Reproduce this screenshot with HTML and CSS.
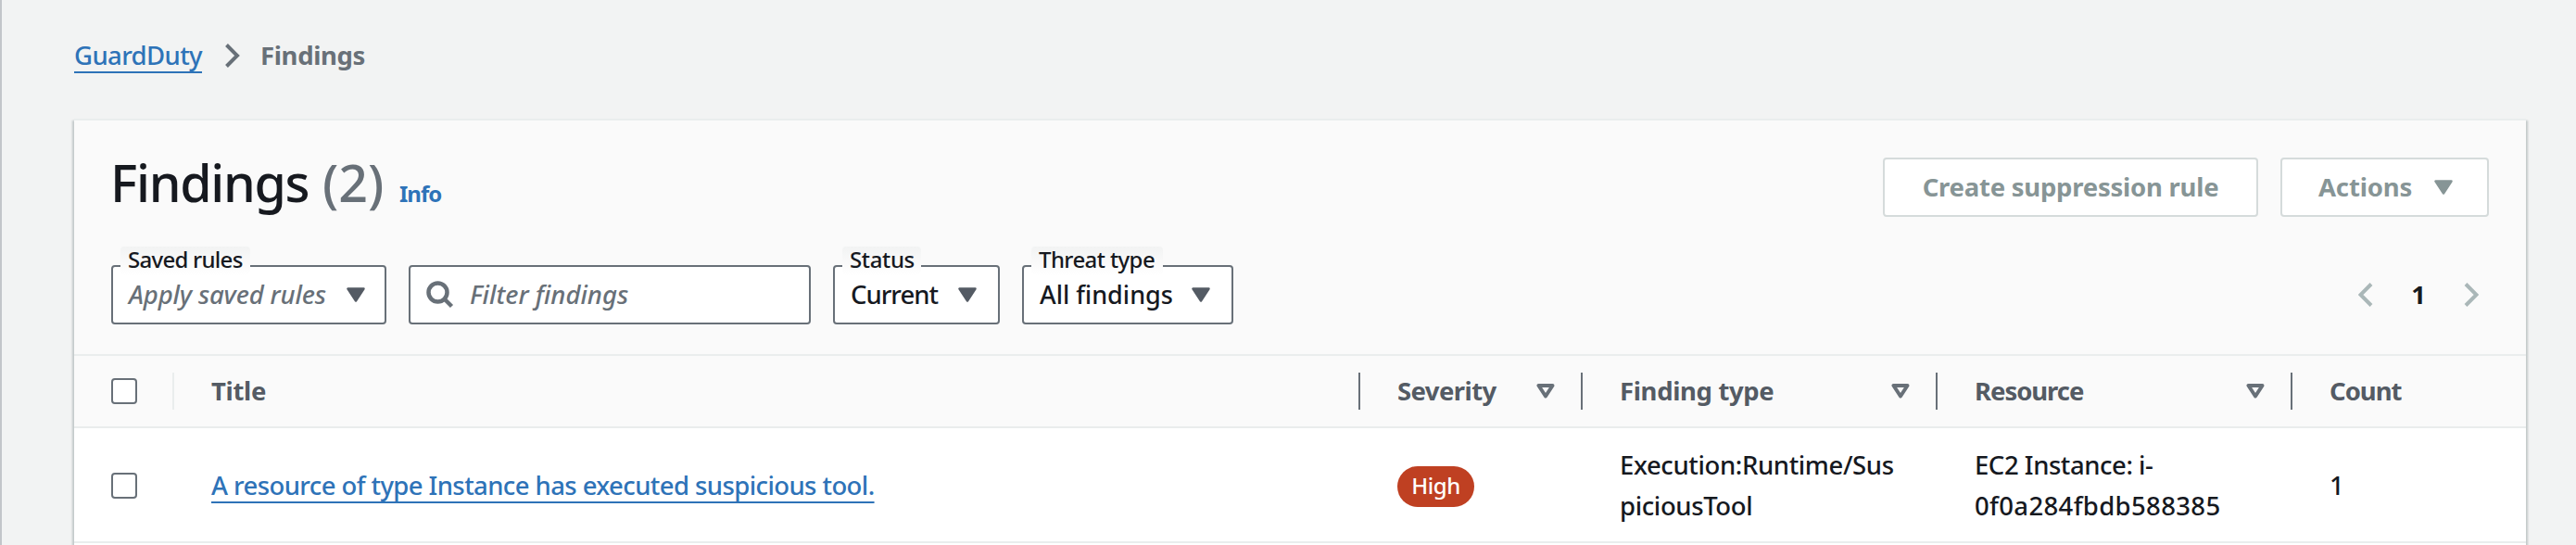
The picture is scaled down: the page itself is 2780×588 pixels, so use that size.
FILE: index.html
```
<!DOCTYPE html>
<html lang="en">
<head>
<meta charset="utf-8">
<title>Findings</title>
<link rel="stylesheet" href="styles.css">
</head>
<body>
<main class="page">
  <nav class="breadcrumb">
    <a class="link link-root" href="#">GuardDuty</a>
    <svg class="crumb-arrow" width="18" height="28" viewBox="0 0 18 28"><path d="M2.5 2.5 14 14 2.5 25.5"/></svg>
    <span class="crumb-current">Findings</span>
  </nav>

  <section class="card">
    <header class="card-header">
      <div class="title-row">
        <h1 class="title"><span class="title-text">Findings</span><span class="counter">(2)</span><a class="info" href="#">Info</a></h1>
        <div class="actions">
          <button class="button suppress" disabled>Create suppression rule</button>
          <button class="button menu" disabled><span class="menu-text">Actions</span><svg class="caret" width="20" height="16" viewBox="0 0 20 16"><path d="M1.5 1.5h17L10 14.5z"/></svg></button>
        </div>
      </div>

      <div class="filter-row">
        <div class="select select-rules">
          <span class="select-label label-rules">Saved rules</span>
          <span class="placeholder">Apply saved rules</span>
          <svg class="caret" width="20" height="16" viewBox="0 0 20 16"><path d="M1.5 1.5h17L10 14.5z"/></svg>
        </div>
        <div class="search">
          <svg class="search-icon" width="30" height="30" viewBox="0 0 30 30"><circle cx="12.5" cy="12.5" r="10"/><path d="m19.5 19.5 8 8"/></svg>
          <span class="search-text">Filter findings</span>
        </div>
        <div class="select select-status">
          <span class="select-label label-status">Status</span>
          <span class="value-status">Current</span>
          <svg class="caret" width="20" height="16" viewBox="0 0 20 16"><path d="M1.5 1.5h17L10 14.5z"/></svg>
        </div>
        <div class="select select-threat">
          <span class="select-label label-threat">Threat type</span>
          <span class="value-threat">All findings</span>
          <svg class="caret" width="20" height="16" viewBox="0 0 20 16"><path d="M1.5 1.5h17L10 14.5z"/></svg>
        </div>
        <div class="pagination">
          <svg class="page-arrow" width="16" height="28" viewBox="0 0 16 28"><path d="M14 2.5 2.5 14 14 25.5"/></svg>
          <span class="page-number">1</span>
          <svg class="page-arrow" width="16" height="28" viewBox="0 0 16 28"><path d="M2 2.5 13.5 14 2 25.5"/></svg>
        </div>
      </div>
    </header>

    <div class="row head">
      <div class="cell check-cell divided light"><span class="checkbox"></span></div>
      <div class="cell divided"><span class="th-title">Title</span></div>
      <div class="cell divided sortable"><span class="th-severity">Severity</span><svg class="sort" width="20" height="16" viewBox="0 0 20 16"><path d="M2.5 2h15L10 13.5z"/></svg></div>
      <div class="cell divided sortable"><span class="th-type">Finding type</span><svg class="sort" width="20" height="16" viewBox="0 0 20 16"><path d="M2.5 2h15L10 13.5z"/></svg></div>
      <div class="cell divided sortable"><span class="th-resource">Resource</span><svg class="sort" width="20" height="16" viewBox="0 0 20 16"><path d="M2.5 2h15L10 13.5z"/></svg></div>
      <div class="cell"><span class="th-count">Count</span></div>
    </div>

    <div class="row item">
      <div class="cell check-cell"><span class="checkbox"></span></div>
      <div class="cell"><a class="link link-finding" href="#">A resource of type Instance has executed suspicious tool.</a></div>
      <div class="cell"><span class="badge">High</span></div>
      <div class="cell"><span class="finding-type">Execution:Runtime/Sus<br>piciousTool</span></div>
      <div class="cell"><span class="instance">EC2 Instance: i-<br><span class="instance-id">0f0a284fbdb588385</span></span></div>
      <div class="cell"><span>1</span></div>
    </div>
    <div class="row next"></div>
  </section>
</main>
</body>
</html>
```
FILE: styles.css
```
* { box-sizing: border-box; }

body {
  margin: 0;
  background: #f2f3f3;
  color: #16191f;
  font-family: "Noto Sans", sans-serif;
  font-size: 27.5px;
  font-weight: 500;
  line-height: 44px;
}

.page {
  height: 588px;
  overflow: hidden;
  padding: 38px 54px 0 78px;
  border-left: 2px solid #c3c6ca;
}

/* Breadcrumb */
.breadcrumb { display: flex; align-items: center; height: 44px; }
.link {
  color: #2e73b8;
  text-decoration: underline 2px;
  text-underline-offset: 7px;
  text-decoration-skip-ink: none;
}
.link-root { width: 138px; letter-spacing: -0.61px; white-space: nowrap; }
.link-finding { letter-spacing: -0.59px; }
.crumb-arrow { margin: 0 22px 0 24px; fill: none; stroke: #687078; stroke-width: 4; }
.crumb-current { color: #687078; font-weight: 700; letter-spacing: -0.35px; margin-left: -1px; }

/* Card */
.card {
  margin-top: 46px;
  height: 480px;
  background: #fff;
  border-top: 2px solid #eaeded;
  box-shadow: 2px 2px 2px rgba(0, 28, 36, .2), -2px 2px 2px rgba(0, 28, 36, .2);
}
.card-header { height: 252px; padding: 35px 40px 0; background: #fafafa; }
.title-row { display: flex; justify-content: space-between; align-items: flex-start; height: 121px; }
.title { display: flex; align-items: baseline; margin: 0; font-size: 55.5px; font-weight: 500; line-height: 64px; white-space: nowrap; }
.title-text { width: 229px; margin-left: -1px; letter-spacing: -1.3px; }
.counter { width: 83px; color: #687078; }
.info { color: #2e73b8; font-size: 24px; font-weight: 700; letter-spacing: -1px; text-decoration: none; }

.actions { display: flex; gap: 24px; padding-top: 5px; }
.button {
  display: flex;
  align-items: center;
  height: 64px;
  padding: 0;
  color: #879596;
  background: #fff;
  border: 2px solid #d5dbdb;
  border-radius: 4px;
  font: 700 27.5px/44px "Noto Sans", sans-serif;
  white-space: nowrap;
}
.suppress { justify-content: center; width: 405px; letter-spacing: -0.24px; }
.menu { justify-content: space-between; width: 225px; padding: 0 37px 0 39px; letter-spacing: -0.16px; }
.caret { flex: none; fill: #545b64; stroke: #545b64; stroke-width: 2.5; stroke-linejoin: round; }
.menu .caret { fill: #879596; stroke: #879596; }

/* Filters */
.filter-row { display: flex; gap: 24px; height: 64px; white-space: nowrap; }
.select, .search {
  position: relative;
  display: flex;
  align-items: center;
  height: 64px;
  background: #fff;
  border: 2px solid #687078;
  border-radius: 4px;
}
.select { justify-content: space-between; padding: 0 21px 0 17px; }
.select-rules { width: 297px; }
.select-status { width: 180px; padding-right: 23px; }
.select-threat { width: 228px; padding-right: 23px; }
.select-label {
  position: absolute;
  left: 8px;
  top: -22px;
  height: 31px;
  padding-left: 8px;
  font-size: 24px;
  line-height: 27px;
  border-radius: 4px;
  background: linear-gradient(#f2f3f3, #fafafa 60%, #fff);
}
.label-rules { width: 140px; letter-spacing: -0.73px; }
.label-status { width: 85px; letter-spacing: -0.35px; }
.label-threat { width: 142px; letter-spacing: -0.6px; }
.placeholder { color: #687078; font-style: italic; letter-spacing: -0.17px; }
.value-status { letter-spacing: -1px; }
.value-threat { font-size: 27px; }
.search { width: 434px; padding-left: 17px; }
.search-icon { fill: none; stroke: #687078; stroke-width: 4.5; }
.search-text { margin-left: 17px; color: #687078; font-style: italic; }

.pagination { display: flex; align-items: center; margin-left: auto; padding-right: 11px; }
.page-arrow { fill: none; stroke: #aab7b8; stroke-width: 4; }
.page-number { width: 98px; text-align: center; font-weight: 700; }

/* Table */
.row { display: grid; grid-template-columns: 108px 1280px 240px 383px 383px 252px; }
.head { height: 78px; border-top: 2px solid #eaeded; background: #fafafa; color: #545b64; font-weight: 700; }
.item { height: 124px; padding-top: 2px; border-top: 2px solid #eaeded; }
.next { height: 4px; border-top: 2px solid #eaeded; }
.cell { display: flex; align-items: center; padding-left: 40px; white-space: nowrap; }
.divided::after { content: ""; width: 2px; height: 40px; margin-left: auto; background: #687078; }
.sortable::after { margin-left: 0; }
.light::after { background: #eaeded; }
.sort { margin: 0 28px 0 auto; fill: none; stroke: #687078; stroke-width: 4; stroke-linejoin: round; }
.checkbox { width: 28px; height: 28px; border: 2px solid #687078; border-radius: 4px; background: #fff; }
.th-title { letter-spacing: -0.3px; }
.th-severity { letter-spacing: -0.58px; }
.th-type { letter-spacing: -0.35px; }
.th-resource { letter-spacing: -1.04px; }
.th-count { letter-spacing: -1px; }
.finding-type { letter-spacing: -0.38px; }
.instance { letter-spacing: -0.45px; }
.instance-id { letter-spacing: 0.35px; }
.badge {
  width: 83px;
  height: 44px;
  margin-top: 2px;
  border-radius: 22px;
  background: #bf4022;
  color: #fff;
  font-size: 24px;
  line-height: 42px;
  letter-spacing: -0.45px;
  text-align: center;
}
```
